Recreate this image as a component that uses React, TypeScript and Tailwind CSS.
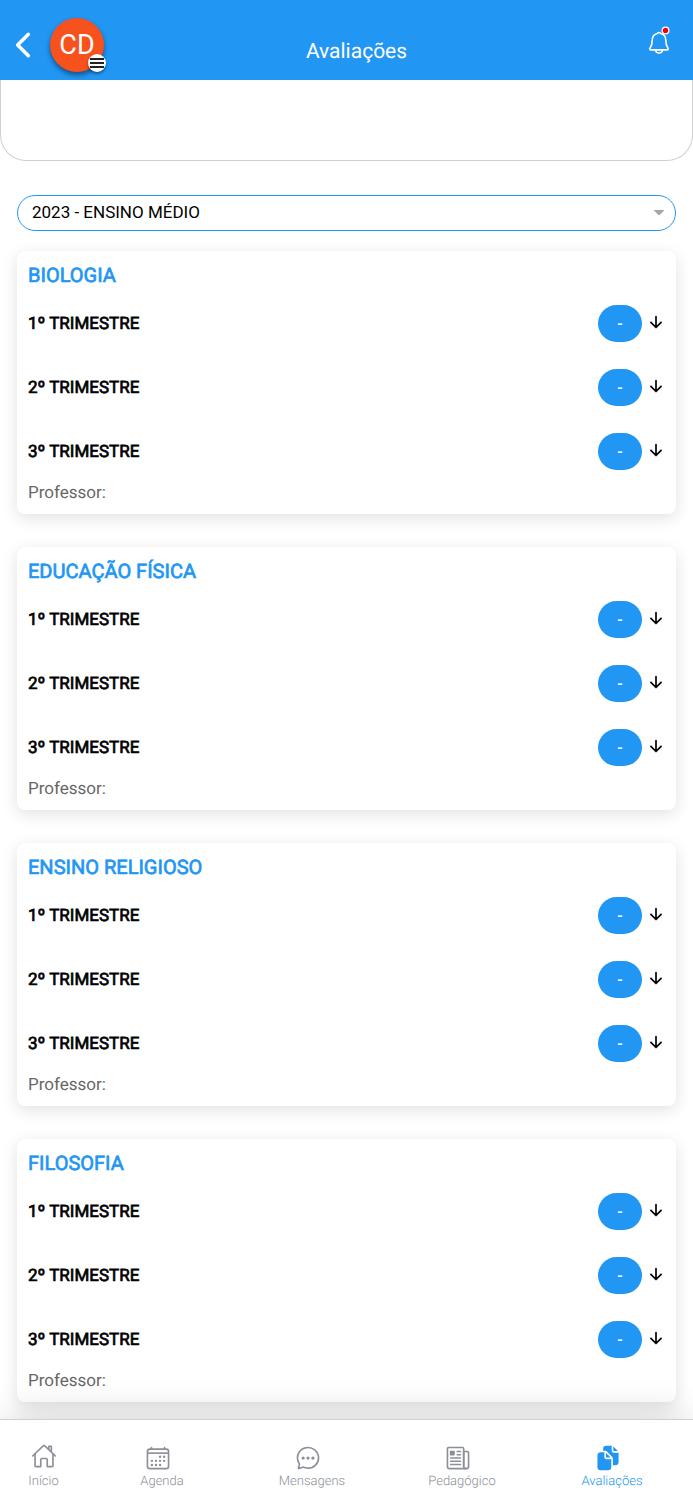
import {
  IoArrowDown,
  IoCalendarOutline,
  IoChatbubbleEllipsesOutline,
  IoChevronBack,
  IoDocuments,
  IoHomeOutline,
  IoNewspaperOutline,
} from "react-icons/io5";

const subjects = ["BIOLOGIA", "EDUCAÇÃO FÍSICA", "ENSINO RELIGIOSO", "FILOSOFIA"];
const terms = ["1º TRIMESTRE", "2º TRIMESTRE", "3º TRIMESTRE"];

const tabs = [
  { label: "Início", Icon: IoHomeOutline, iconClass: "-mt-0.5 mb-0.5" },
  { label: "Agenda", Icon: IoCalendarOutline, iconClass: "mr-2" },
  { label: "Mensagens", Icon: IoChatbubbleEllipsesOutline, iconClass: "mr-2" },
  { label: "Pedagógico", Icon: IoNewspaperOutline, iconClass: "mr-2" },
  { label: "Avaliações", Icon: IoDocuments, iconClass: "mr-2", active: true },
];

function BellIcon() {
  return (
    <svg viewBox="0 0 24 28" className="h-7 w-6" fill="none" aria-hidden="true">
      <path
        d="M12 6.5c-.8 0-1.300.5-1.600 1C7 8.300 5.200 11 5.200 14.200c0 4.200-.6 5.800-2 7.600-.7.900-.5 2.100.7 2.100h16.200c1.200 0 1.400-1.200.7-2.100-1.400-1.800-2-3.400-2-7.600 0-3.200-1.800-5.900-5.200-6.700-.3-.5-.8-1-1.600-1z"
        stroke="white"
        strokeWidth="1.600"
        strokeLinejoin="round"
      />
      <path d="M8.500 24c.2 1.900 1.700 3 3.500 3s3.300-1.100 3.500-3" stroke="white" strokeWidth="1.600" />
      <circle cx="18.500" cy="4.500" r="4" fill="white" />
      <circle cx="18.500" cy="4.500" r="2.700" fill="#f00" />
    </svg>
  );
}

function Header() {
  return (
    <header className="sticky top-0 z-10 grid h-20 grid-cols-[1fr_auto_1fr] items-center bg-[#2196f3] text-white">
      <div className="mt-[10px] flex items-center gap-2 pl-1">
        <button type="button" aria-label="Voltar">
          <IoChevronBack size={38} />
        </button>
        <button
          type="button"
          aria-label="Abrir menu"
          className="relative flex size-[54px] items-center justify-center rounded-full bg-[#f7511d] text-[27px] shadow-[0_3px_5px_rgba(0,0,0,0.45)]"
        >
          CD
          <span className="absolute -right-0.5 bottom-0 flex size-[18px] flex-col items-center justify-center gap-0.5 rounded-full bg-white shadow-[0_2px_3px_rgba(0,0,0,0.4)]">
            <span className="h-0.5 w-3.5 bg-[#222]" />
            <span className="h-0.5 w-3.5 bg-[#222]" />
            <span className="h-0.5 w-3.5 bg-[#222]" />
          </span>
        </button>
      </div>
      <h1 className="mt-6 pl-5 text-[21px] leading-6">Avaliações</h1>
      <button type="button" aria-label="Notificações" className="mr-[22px] justify-self-end">
        <BellIcon />
      </button>
    </header>
  );
}

function SubjectCard({ name }: { name: string }) {
  return (
    <section className="rounded-lg bg-white px-[11px] pt-[9px] pb-[9px] shadow-[0_4px_16px_rgba(0,0,0,0.12)]">
      <h2 className="text-xl leading-[30px] text-[#2196f3] [-webkit-text-stroke:0.7px_#2196f3]">{name}</h2>
      <ul className="mt-[15px] flex flex-col gap-[27px]">
        {terms.map((term) => (
          <li key={term} className="flex h-[37px] items-center">
            <span className="flex-1 text-[17px] leading-6 text-black [-webkit-text-stroke:0.7px_black]">{term}</span>
            <span className="flex h-[37px] w-11 items-center justify-center rounded-full bg-[#2196f3] text-base font-medium text-white">
              -
            </span>
            <button type="button" aria-label={`Detalhes do ${term}`} className="mb-1 ml-[5px] text-black">
              <IoArrowDown size={18} />
            </button>
          </li>
        ))}
      </ul>
      <p className="mt-[11px] text-[17px] leading-6 text-[#666]">Professor:</p>
    </section>
  );
}

function TabBar() {
  return (
    <nav className="sticky bottom-0 z-10 grid h-[81px] grid-cols-[87fr_150fr_150fr_150fr_150fr_6fr] border-t border-[#d0d0d0] bg-white pt-[25px] shadow-[0_-8px_40px_-8px_rgba(0,0,0,0.2)]">
      {tabs.map(({ label, Icon, iconClass, active }) => (
        <a
          key={label}
          href="#"
          aria-current={active ? "page" : undefined}
          className={`flex flex-col items-center gap-px text-[13px] leading-5 font-light ${active ? "text-[#2196f3]" : "text-[#8c8f98]"}`}
        >
          <Icon size={26} className={iconClass} />
          {label}
        </a>
      ))}
    </nav>
  );
}

export default function App() {
  return (
    <div className="flex min-h-screen flex-col bg-white font-['Roboto',sans-serif] [text-rendering:geometricPrecision]">
      <Header />
      <main className="flex-1">
        <div className="h-[81px] rounded-b-[26px] border border-t-0 border-[#d0d0d0]" />
        <div className="px-[17px] pt-[34px] pb-4">
          <div className="relative mb-[20px]">
            <select
              aria-label="Período letivo"
              className="h-9 w-full appearance-none rounded-full border border-[#2196f3] bg-white pr-8 pl-[14px] text-[17px] text-black"
            >
              <option>2023 - ENSINO MÉDIO</option>
            </select>
            <svg
              viewBox="0 0 12 6"
              className="pointer-events-none absolute top-[15px] right-[11px] h-1.5 w-3"
              aria-hidden="true"
            >
              <path d="M0.500 0h11L6 5.500z" fill="#a6a6a6" />
            </svg>
          </div>
          <div className="flex flex-col gap-[33px]">
            {subjects.map((name) => (
              <SubjectCard key={name} name={name} />
            ))}
          </div>
        </div>
      </main>
      <TabBar />
    </div>
  );
}
